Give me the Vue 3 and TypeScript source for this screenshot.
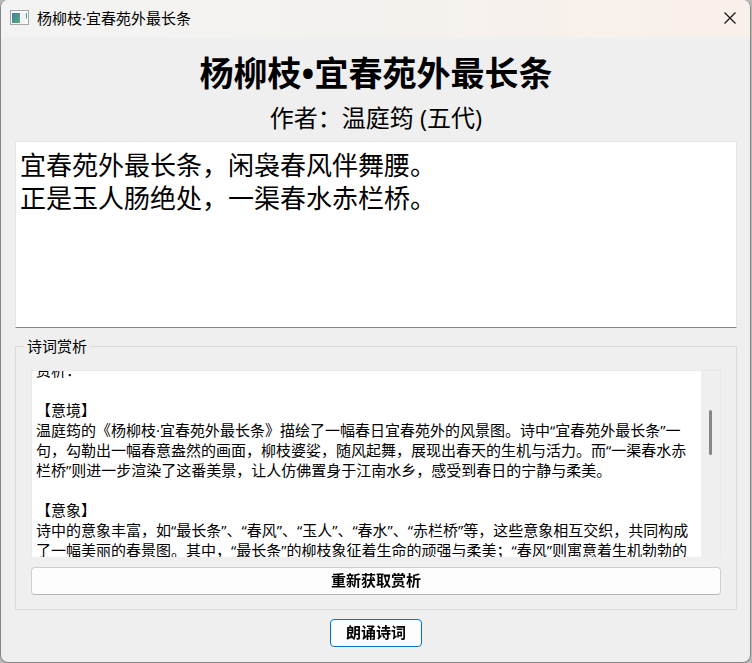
<script setup lang="ts">
import { onMounted, ref } from 'vue'

const caption = '杨柳枝·宜春苑外最长条'
const title = '杨柳枝•宜春苑外最长条'
const author = '作者：温庭筠 (五代)'
const poem = ref('宜春苑外最长条，闲袅春风伴舞腰。\n正是玉人肠绝处，一渠春水赤栏桥。')
const analysis = ref(
  [
    '赏析：',
    '',
    '【意境】',
    '温庭筠的《杨柳枝·宜春苑外最长条》描绘了一幅春日宜春苑外的风景图。诗中“宜春苑外最长条”一句，勾勒出一幅春意盎然的画面，柳枝婆娑，随风起舞，展现出春天的生机与活力。而“一渠春水赤栏桥”则进一步渲染了这番美景，让人仿佛置身于江南水乡，感受到春日的宁静与柔美。',
    '',
    '【意象】',
    '诗中的意象丰富，如“最长条”、“春风”、“玉人”、“春水”、“赤栏桥”等，这些意象相互交织，共同构成了一幅美丽的春景图。其中，“最长条”的柳枝象征着生命的顽强与柔美；“春风”则寓意着生机勃勃的',
  ].join('\n'),
)

const analysisBox = ref<HTMLTextAreaElement | null>(null)

onMounted(() => {
  if (analysisBox.value) analysisBox.value.scrollTop = 16
})
</script>

<template>
  <main class="window">
    <header class="titlebar">
      <svg class="app-icon" width="19" height="15" viewBox="0 0 19 15" aria-hidden="true">
        <defs>
          <linearGradient id="pane" x1="0" y1="0" x2="1" y2="1">
            <stop offset="0" stop-color="#3f7fa3" />
            <stop offset="1" stop-color="#58ab72" />
          </linearGradient>
          <linearGradient id="strip" x1="0" y1="0" x2="0" y2="1">
            <stop offset="0" stop-color="#4687b0" />
            <stop offset="1" stop-color="#6cb585" />
          </linearGradient>
        </defs>
        <rect x="0.5" y="0.5" width="18" height="14" fill="#fbfbfb" stroke="#a3a7ab" />
        <rect x="2" y="3" width="8" height="10" fill="url(#pane)" />
        <rect x="11" y="3" width="4" height="10" fill="#eef0f1" />
        <rect x="16" y="3" width="1" height="6" fill="url(#strip)" />
      </svg>
      <span class="caption">{{ caption }}</span>
      <button class="close" type="button" aria-label="关闭">
        <svg width="12" height="12" viewBox="0 0 12 12" aria-hidden="true">
          <path d="M0.5 0.5 11.5 11.5M11.5 0.5 0.5 11.5" fill="none" stroke="#111" stroke-width="1.2" />
        </svg>
      </button>
    </header>

    <div class="content">
      <h1>{{ title }}</h1>
      <p class="author">{{ author }}</p>
      <textarea v-model="poem" class="poem" readonly aria-label="诗词"></textarea>

      <fieldset class="group">
        <legend>诗词赏析</legend>
        <div class="scroll-area">
          <textarea ref="analysisBox" v-model="analysis" class="analysis" readonly aria-label="诗词赏析"></textarea>
          <div class="track"><div class="thumb"></div></div>
        </div>
        <button class="btn" type="button">重新获取赏析</button>
      </fieldset>

      <button class="btn primary" type="button">朗诵诗词</button>
    </div>
  </main>
</template>

<style>
body {
  margin: 0;
  background: #b9b9b9;
}
</style>

<style scoped>
.window {
  box-sizing: border-box;
  height: 100vh;
  min-height: 480px;
  margin-right: 1px;
  display: flex;
  flex-direction: column;
  overflow: hidden;
  border: 1px solid #858585;
  border-top-width: 0;
  border-radius: 8px;
  background: #efefef;
  color: #000;
  font-family: 'Open Sans', 'Noto Sans CJK SC', sans-serif;
  font-size: 15px;
  line-height: 20px;
}

button,
textarea {
  box-sizing: border-box;
  margin: 0;
  font: inherit;
  color: inherit;
}

.titlebar {
  box-sizing: border-box;
  flex: none;
  height: 37px;
  display: flex;
  align-items: center;
  padding: 0 0 2px 9px;
  background: linear-gradient(90deg, #f3f3f3, #f4f2ee 50%, #f9f0eb 90%);
}

.app-icon {
  flex: none;
}

.caption {
  flex: 1;
  margin-left: 8px;
}

.close {
  width: 40px;
  height: 34px;
  display: flex;
  align-items: center;
  justify-content: center;
  padding: 0;
  border: 0;
  background: none;
}

.content {
  flex: 1;
  min-height: 0;
  display: flex;
  flex-direction: column;
  padding: 13px 13px 15px 14px;
}

h1 {
  margin: 0;
  font-size: 34px;
  line-height: 46px;
  font-weight: 700;
  text-align: center;
}

.author {
  margin: 5px 0 6px;
  font-size: 24px;
  line-height: 34px;
  text-align: center;
}

.poem {
  display: block;
  flex: 1 1 0;
  min-height: 0;
  width: 100%;
  padding: 7px 4px;
  border: 1px solid #e6e6e6;
  border-bottom-color: #868686;
  border-radius: 0;
  outline: 0;
  resize: none;
  background: #fff;
  font-size: 26px;
  line-height: 33px;
}

.group {
  flex: 1 1 73px;
  min-width: 0;
  min-height: 0;
  display: flex;
  flex-direction: column;
  margin: 8px 0 9px;
  padding: 14px 15px;
  border: 1px solid #dadada;
}

legend {
  margin-left: -7px;
  padding: 0 3px;
}

.scroll-area {
  flex: 1;
  min-height: 0;
  display: flex;
  border: 1px solid #e9e9e9;
  border-bottom: 0;
}

.analysis {
  flex: 1;
  min-width: 0;
  padding: 5px 4px;
  border: 0;
  border-radius: 0;
  outline: 0;
  resize: none;
  background: #fff;
  scrollbar-width: none;
}

.track {
  width: 19px;
  flex: none;
}

.thumb {
  width: 3px;
  height: 24%;
  margin: 39px 0 0 8px;
  border-radius: 2px;
  background: #868686;
}

.btn {
  height: 28px;
  margin-top: 10px;
  padding: 0 15px 2px;
  border: 1px solid #cfcfcf;
  border-bottom-color: #b8b8b8;
  border-radius: 4px;
  background: #fdfdfd;
  font-weight: 700;
}

.primary {
  flex: none;
  align-self: center;
  margin-top: 0;
  border-color: #0078d4;
}
</style>
